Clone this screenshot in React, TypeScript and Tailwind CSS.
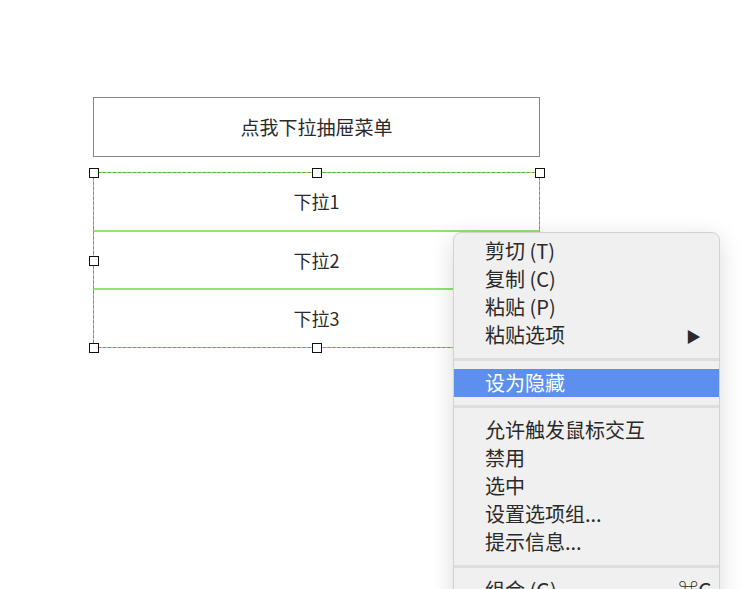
import React from 'react';

const font = { fontFamily: '"Noto Sans CJK SC", "Noto Sans", sans-serif' };

const Handle = ({ className }: { className: string }) => (
  <div className={`absolute w-[10px] h-[10px] bg-white border-[1.5px] border-[#111] ${className}`} />
);

type Item = { label: string; arrow?: boolean; shortcut?: string; active?: boolean } | { sep: number };

const items: Item[] = [
  { label: '剪切 (T)' },
  { label: '复制 (C)' },
  { label: '粘贴 (P)' },
  { label: '粘贴选项', arrow: true },
  { sep: 20 },
  { label: '设为隐藏', active: true },
  { sep: 19 },
  { label: '允许触发鼠标交互' },
  { label: '禁用' },
  { label: '选中' },
  { label: '设置选项组...' },
  { label: '提示信息...' },
  { sep: 20 },
  { label: '组合 (G)', shortcut: '⌘G' },
];

export default function App() {
  return (
    <div className="relative w-[750px] h-[589px] overflow-hidden bg-white" style={font}>
      <div className="flex flex-col gap-[15px] pt-[97px] pl-[93px]">
        <div className="w-[447px] h-[60px] border border-[#858585] flex items-center justify-center text-[19px] text-[#2a2a2a]">
          点我下拉抽屉菜单
        </div>

        <div className="relative w-[447px] h-[176px] border border-[#86e063]">
          <div className="absolute -inset-px border border-dashed border-black/25" />
          <div className="flex flex-col h-full">
            <div className="flex-1 flex items-center justify-center text-[18px] text-[#2a2a2a] border-b-2 border-[#8fe36f]">下拉1</div>
            <div className="flex-1 flex items-center justify-center text-[18px] text-[#2a2a2a] border-b-2 border-[#8fe36f]">下拉2</div>
            <div className="flex-1 flex items-center justify-center text-[18px] text-[#2a2a2a]">下拉3</div>
          </div>
          <Handle className="-left-[5.5px] -top-[5.5px]" />
          <Handle className="left-[217.5px] -top-[5.5px]" />
          <Handle className="-right-[5.5px] -top-[5.5px]" />
          <Handle className="-left-[5.5px] top-[82.5px]" />
          <Handle className="-left-[5.5px] -bottom-[5.5px]" />
          <Handle className="left-[217.5px] -bottom-[5.5px]" />
        </div>
      </div>

      <div className="absolute left-[453px] top-[232px] w-[267px] h-[390px] rounded-[8px] bg-[#f0f0f0] border border-[#d2d2d2] shadow-[0_6px_24px_rgba(0,0,0,0.14)] pt-[4px]">
        {items.map((it, i) =>
          'sep' in it ? (
            <div key={i} className={`flex items-center ${it.sep === 19 ? 'h-[19px]' : 'h-[20px]'}`}>
              <div className="w-full h-[3px] bg-[#dedede]" />
            </div>
          ) : (
            <div
              key={i}
              className={`h-[28px] flex items-center pl-[31px] pr-[18px] text-[20px] leading-none ${
                it.active ? 'bg-[#5c8fee] text-white' : 'text-[#2a2a2a]'
              }`}
            >
              <span className="flex-1">{it.label}</span>
              {it.arrow && <span className="text-[15px] text-[#2a2a2a]">▶</span>}
              {it.shortcut && <span className="text-[20px] text-[#2a2a2a] -mr-[11px]">{it.shortcut}</span>}
            </div>
          )
        )}
      </div>
    </div>
  );
}
